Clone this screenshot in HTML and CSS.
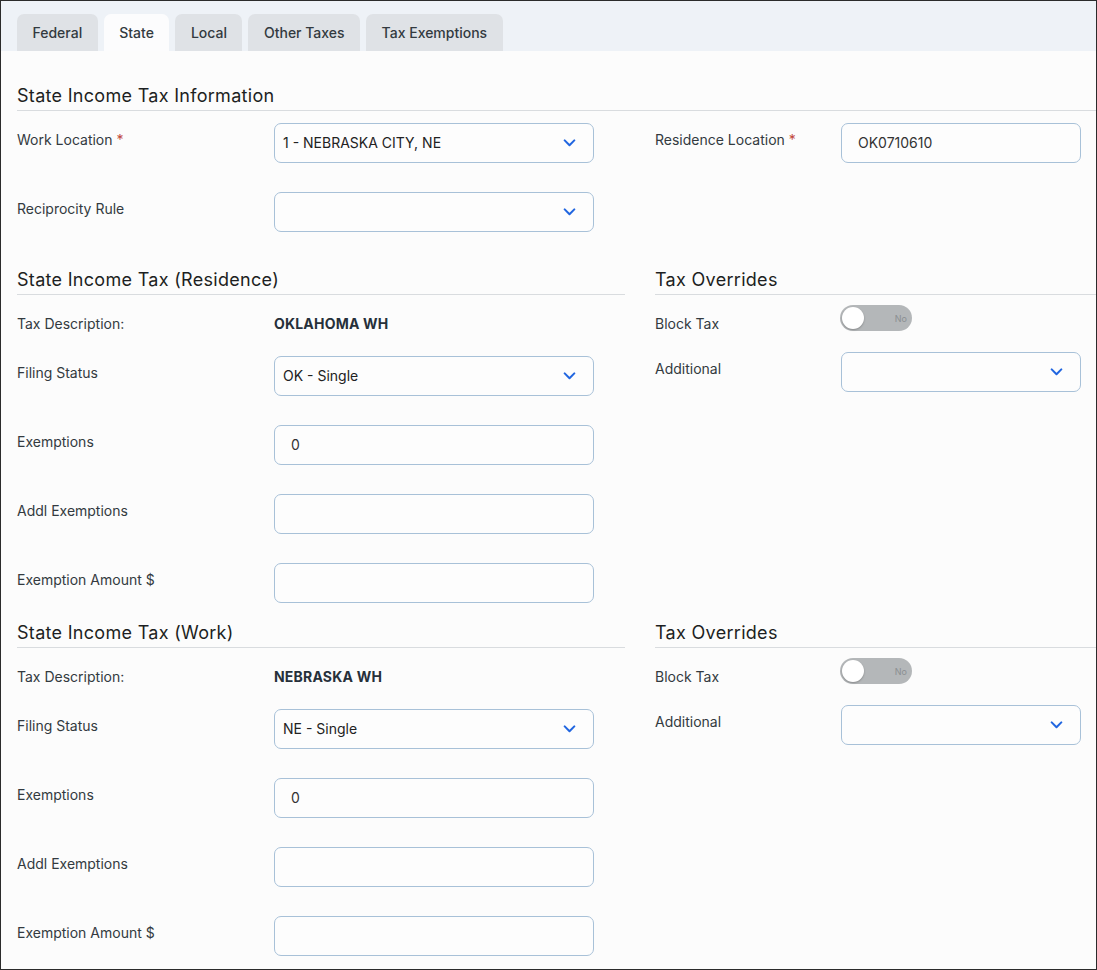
FILE: index.html
```html
<!DOCTYPE html>
<html lang="en">
<head>
<meta charset="utf-8">
<title>State Tax</title>
<link rel="stylesheet" href="styles.css">
</head>
<body>
<div class="frame">
  <nav class="tabs">
    <div class="tab">Federal</div>
    <div class="tab active">State</div>
    <div class="tab">Local</div>
    <div class="tab">Other Taxes</div>
    <div class="tab">Tax Exemptions</div>
  </nav>
  <main class="content">
    <section class="sec-info">
      <h2 class="title">State Income Tax Information</h2>
      <div class="cols">
        <div class="col left">
          <div class="row">
            <div class="label">Work Location <span class="req">*</span></div>
            <div class="field select"><span class="val">1 - NEBRASKA CITY, NE</span><svg class="chev" viewBox="0 0 12 8" width="13" height="8"><path d="M1.2 1.4 L6 6.2 L10.8 1.4" fill="none" stroke="#2166e0" stroke-width="2" stroke-linecap="round" stroke-linejoin="round"/></svg></div>
          </div>
          <div class="row">
            <div class="label">Reciprocity Rule</div>
            <div class="field select"><span class="val"></span><svg class="chev" viewBox="0 0 12 8" width="13" height="8"><path d="M1.2 1.4 L6 6.2 L10.8 1.4" fill="none" stroke="#2166e0" stroke-width="2" stroke-linecap="round" stroke-linejoin="round"/></svg></div>
          </div>
        </div>
        <div class="col right">
          <div class="row">
            <div class="label">Residence Location <span class="req">*</span></div>
            <div class="field text"><span class="val">OK0710610</span></div>
          </div>
        </div>
      </div>
    </section>

    <div class="cols sec-res">
      <section class="col left">
        <h2 class="title">State Income Tax (Residence)</h2>
        <div class="row desc">
          <div class="label">Tax Description:</div>
          <div class="strong">OKLAHOMA WH</div>
        </div>
        <div class="row">
          <div class="label">Filing Status</div>
          <div class="field select"><span class="val">OK - Single</span><svg class="chev" viewBox="0 0 12 8" width="13" height="8"><path d="M1.2 1.4 L6 6.2 L10.8 1.4" fill="none" stroke="#2166e0" stroke-width="2" stroke-linecap="round" stroke-linejoin="round"/></svg></div>
        </div>
        <div class="row">
          <div class="label">Exemptions</div>
          <div class="field text"><span class="val">0</span></div>
        </div>
        <div class="row">
          <div class="label">Addl Exemptions</div>
          <div class="field text"><span class="val"></span></div>
        </div>
        <div class="row">
          <div class="label">Exemption Amount $</div>
          <div class="field text"><span class="val"></span></div>
        </div>
      </section>
      <section class="col right">
        <h2 class="title">Tax Overrides</h2>
        <div class="row toggle-row">
          <div class="label">Block Tax</div>
          <div class="toggle"><span class="knob"></span><span class="no">No</span></div>
        </div>
        <div class="row">
          <div class="label">Additional</div>
          <div class="field select"><span class="val"></span><svg class="chev" viewBox="0 0 12 8" width="13" height="8"><path d="M1.2 1.4 L6 6.2 L10.8 1.4" fill="none" stroke="#2166e0" stroke-width="2" stroke-linecap="round" stroke-linejoin="round"/></svg></div>
        </div>
      </section>
    </div>

    <div class="cols sec-work">
      <section class="col left">
        <h2 class="title">State Income Tax (Work)</h2>
        <div class="row desc">
          <div class="label">Tax Description:</div>
          <div class="strong">NEBRASKA WH</div>
        </div>
        <div class="row">
          <div class="label">Filing Status</div>
          <div class="field select"><span class="val">NE - Single</span><svg class="chev" viewBox="0 0 12 8" width="13" height="8"><path d="M1.2 1.4 L6 6.2 L10.8 1.4" fill="none" stroke="#2166e0" stroke-width="2" stroke-linecap="round" stroke-linejoin="round"/></svg></div>
        </div>
        <div class="row">
          <div class="label">Exemptions</div>
          <div class="field text"><span class="val">0</span></div>
        </div>
        <div class="row">
          <div class="label">Addl Exemptions</div>
          <div class="field text"><span class="val"></span></div>
        </div>
        <div class="row">
          <div class="label">Exemption Amount $</div>
          <div class="field text"><span class="val"></span></div>
        </div>
      </section>
      <section class="col right">
        <h2 class="title">Tax Overrides</h2>
        <div class="row toggle-row">
          <div class="label">Block Tax</div>
          <div class="toggle"><span class="knob"></span><span class="no">No</span></div>
        </div>
        <div class="row">
          <div class="label">Additional</div>
          <div class="field select"><span class="val"></span><svg class="chev" viewBox="0 0 12 8" width="13" height="8"><path d="M1.2 1.4 L6 6.2 L10.8 1.4" fill="none" stroke="#2166e0" stroke-width="2" stroke-linecap="round" stroke-linejoin="round"/></svg></div>
        </div>
      </section>
    </div>
  </main>
</div>
</body>
</html>
```

FILE: styles.css
```css
* { box-sizing: border-box; }
html, body { margin: 0; padding: 0; }
body {
  font-family: Inter, "Noto Sans", "Liberation Sans", sans-serif;
  color: #333;
  background: #fff;
}
.frame {
  width: 1097px;
  height: 970px;
  border: 1px solid #2b2b2b;
  overflow: hidden;
  background: #fcfcfc;
}
.tabs {
  height: 50px;
  background: #eef2f7;
  display: flex;
  align-items: flex-end;
  gap: 6px;
  padding-left: 16px;
}
.tab {
  height: 37px;
  line-height: 37px;
  padding: 0 15.5px;
  font-size: 14px;
  font-weight: 500;
  color: #333a40;
  background: #dfe2e6;
  border-radius: 7px 7px 0 0;
}
.tab.active { background: #fcfcfd; }
.content {
  padding-left: 16px;
}
.title {
  margin: 0;
  font-size: 18px;
  font-weight: 400;
  line-height: 24px;
  color: #1d1f22;
  padding-bottom: 2px;
  border-bottom: 1px solid #d9dcdf;
  margin-bottom: 12px;
  letter-spacing: 0.3px;
}
.sec-info .title { margin-top: 33px; }
.sec-res { margin-top: 36px; }
.sec-work { margin-top: 18px; }
.cols {
  display: grid;
  grid-template-columns: 608px 441px;
  column-gap: 30px;
}
.row {
  display: flex;
  align-items: flex-start;
  margin-bottom: 29px;
}
.row:last-child { margin-bottom: 0; }
.row.desc { margin-bottom: 22px; }
.label {
  font-size: 14px;
  line-height: 20px;
  padding-top: 7px;
  color: #333a40;
  flex: none;
}
.left .label { width: 257px; }
.right .label { width: 186px; }
.req { color: #c0473b; }
.strong {
  font-size: 14px;
  line-height: 20px;
  padding-top: 7px;
  font-weight: 700;
  color: #26303a;
  letter-spacing: 0.2px;
}
.field {
  height: 40px;
  border: 1px solid #a8c1d8;
  border-radius: 7px;
  background: #fdfdfd;
  display: flex;
  align-items: center;
  font-size: 14px;
  color: #222;
  padding-bottom: 1px;
}
.left .field { width: 320px; }
.right .field { width: 240px; }
.field.select { padding: 0 17px 1px 8px; justify-content: space-between; }
.field.text { padding: 0 16px 1px; }
.field.text .val { color: #333; }
.chev { flex: none; }
.toggle-row { margin-bottom: 0; height: 45px; }
.toggle {
  width: 72px;
  height: 26px;
  margin-top: -2px;
  margin-left: -1px;
  border-radius: 13px;
  background: #b4b7b9;
  position: relative;
  display: flex;
  align-items: center;
  justify-content: flex-end;
  padding-right: 5px;
}
.knob {
  position: absolute;
  left: 2px;
  top: 2px;
  width: 22px;
  height: 22px;
  border-radius: 50%;
  background: #fff;
  box-shadow: 0 1px 2px rgba(0,0,0,0.25);
}
.no {
  font-size: 9px;
  color: #8b8f92;
}
```
